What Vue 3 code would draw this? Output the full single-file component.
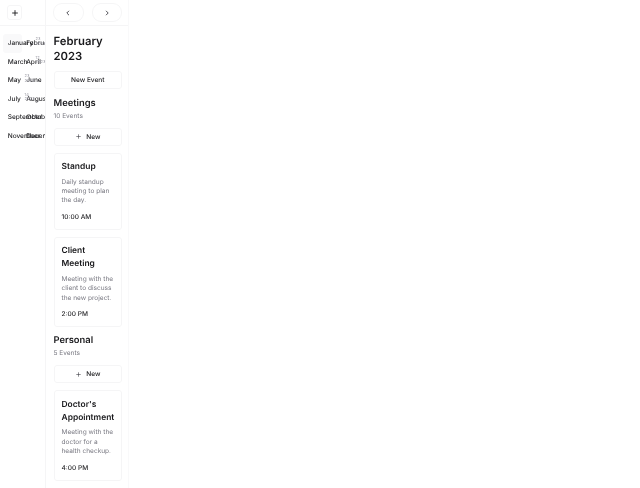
<script setup>
const months = [
  { name: 'January', note: '', active: true },
  { name: 'February', note: '23\n2023' },
  { name: 'March', note: '' },
  { name: 'April', note: '12\n2023' },
  { name: 'May', note: '' },
  { name: 'June', note: '23\n2023', left: true },
  { name: 'July', note: '' },
  { name: 'August', note: '14\n2023', left: true },
  { name: 'September', note: '' },
  { name: 'October', note: '' },
  { name: 'November', note: '' },
  { name: 'December', note: '' }
]
const sections = [
  {
    title: 'Meetings',
    count: '10 Events',
    events: [
      { title: 'Standup', text: 'Daily standup meeting to plan the day.', time: '10:00 AM' },
      { title: 'Client Meeting', text: 'Meeting with the client to discuss the new project.', time: '2:00 PM' }
    ]
  },
  {
    title: 'Personal',
    count: '5 Events',
    events: [
      { title: "Doctor's Appointment", text: 'Meeting with the doctor for a health checkup.', time: '4:00 PM' }
    ]
  }
]
</script>

<template>
  <div class="app">
    <aside class="side">
      <div class="side-top">
        <button class="plus-btn">
          <svg width="8" height="8" viewBox="0 0 8 8"><path d="M4 1.200v5.600M1.200 4h5.600" stroke="#18181b" stroke-width=".9" fill="none" /></svg>
        </button>
      </div>
      <div class="months">
        <div v-for="m in months" :key="m.name" class="month" :class="{ active: m.active }">
          <span class="mname">{{ m.name }}</span>
          <span v-if="m.note" class="mnote" :class="{ left: m.left }">{{ m.note }}</span>
        </div>
      </div>
    </aside>
    <main class="main">
      <div class="topbar">
        <button class="nav">
          <svg width="8" height="8" viewBox="0 0 8 8"><path d="M5 1.800 2.800 4 5 6.200" stroke="#3f3f46" stroke-width=".9" fill="none" /></svg>
        </button>
        <button class="nav">
          <svg width="8" height="8" viewBox="0 0 8 8"><path d="M3 1.800 5.200 4 3 6.200" stroke="#3f3f46" stroke-width=".9" fill="none" /></svg>
        </button>
      </div>
      <div class="content">
        <h1 class="heading">February 2023</h1>
        <button class="btn new-event">New Event</button>
        <section v-for="s in sections" :key="s.title" class="section">
          <h2 class="sec-title">{{ s.title }}</h2>
          <p class="sec-count">{{ s.count }}</p>
          <button class="btn new">
            <svg width="7" height="7" viewBox="0 0 7 7"><path d="M3.500 1.300v4.400M1.300 3.500h4.400" stroke="#3f3f46" stroke-width=".6" fill="none" /></svg>
            New
          </button>
          <article v-for="e in s.events" :key="e.title" class="card">
            <h3 class="card-title">{{ e.title }}</h3>
            <p class="card-text">{{ e.text }}</p>
            <p class="card-time">{{ e.time }}</p>
          </article>
        </section>
      </div>
    </main>
  </div>
</template>

<style>
html, body { margin: 0; background: #fff; }
</style>

<style scoped>
.app {
  display: flex;
  width: 640px;
  height: 488px;
  overflow: hidden;
  font-family: Inter, "Liberation Sans", sans-serif;
  text-rendering: geometricPrecision;
  color: #18181b;
}
button { font-family: inherit; color: inherit; background: transparent; cursor: pointer; padding: 0; text-rendering: geometricPrecision; }
.side { width: 45px; flex: none; border-right: 1px solid #f5f5f6; overflow: hidden; will-change: opacity; }
.side-top {
  height: 25px;
  border-bottom: 1px solid #f5f5f6;
  display: flex;
  align-items: center;
  padding-left: 7px;
}
.plus-btn {
  width: 15px;
  height: 15px;
  border: 1px solid #f5f5f6;
  border-radius: 3px;
  display: flex;
  align-items: center;
  justify-content: center;
}
.months {
  display: grid;
  grid-template-columns: 18.500px 18.500px;
  grid-auto-rows: 18.500px;
  padding: 8px 0 0 3px;
}
.month { position: relative; font-size: 6.560px; line-height: 18.500px; padding-left: 4.700px; white-space: nowrap; color: #27272a; font-weight: 500; }
.month.active { background: #f9f9fa; border-radius: 3px; }
.mname { position: relative; }
.mnote {
  position: absolute;
  left: 14px;
  top: 3px;
  font-size: 4px;
  line-height: 4.500px;
  font-weight: 400;
  white-space: pre;
  color: #a1a1aa;
}
.mnote.left { left: 3px; }
.main { width: 82px; flex: none; border-right: 1px solid #f9f9fa; will-change: opacity; }
.topbar {
  height: 25px;
  display: flex;
  gap: 8px;
  align-items: center;
  padding-left: 7px;
  border-bottom: 1px solid #f5f5f6;
}
.nav {
  width: 30.500px;
  height: 19px;
  border: 1px solid #f5f5f6;
  border-radius: 9px;
  display: flex;
  align-items: center;
  justify-content: center;
}
.content { padding: 7.500px 6px 0 7.500px; }
.heading { margin: 0; font-size: 11.300px; line-height: 15.500px; font-weight: 600; }
.btn {
  display: flex;
  box-sizing: border-box;
  width: 100%;
  height: 18px;
  align-items: center;
  justify-content: center;
  gap: 4px;
  border: 1px solid #f5f5f6;
  border-radius: 3px;
  font-size: 6.560px;
  font-weight: 500;
}
.new-event { margin-top: 6.500px; }
.section { margin-top: 7.500px; }
.sec-title { margin: 0; font-size: 9.370px; line-height: 13px; font-weight: 600; }
.sec-count { margin: 1px 0 0; font-size: 6.560px; line-height: 10px; color: #7a7a83; }
.new { margin-top: 7px; }
.card {
  margin-top: 7px;
  padding: 7.500px 7px 6.500px;
  border: 1px solid #f5f5f6;
  border-radius: 3px;
}
.card-title { margin: 0; font-size: 8.430px; line-height: 13px; font-weight: 600; }
.card-text { margin: 3.500px 0 0; font-size: 6.560px; line-height: 9.400px; color: #7a7a83; }
.card-time { margin: 6.500px 0 0; font-size: 6.560px; line-height: 10px; font-weight: 500; color: #27272a; }
</style>
